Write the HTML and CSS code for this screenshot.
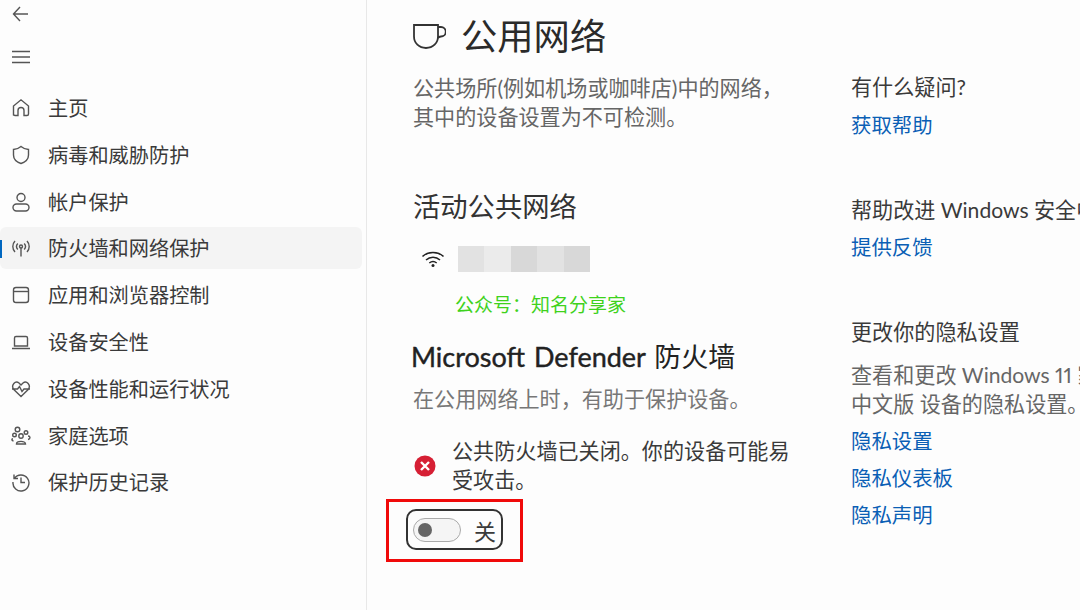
FILE: index.html
```html
<!DOCTYPE html>
<html lang="zh-CN">
<head>
<meta charset="UTF-8" />
<title>公用网络</title>
<link rel="stylesheet" href="styles.css">
</head>
<body>
<div class="app">
  <nav class="sidebar">
    <div class="top-btn back">
      <svg width="18" height="16" viewBox="0 0 18 16"><path d="M8 1 1.500 8 8 15M1.500 8H16" /></svg>
    </div>
    <div class="top-btn menu">
      <svg width="18" height="14" viewBox="0 0 18 14"><path d="M0 1.500H18M0 7H18M0 12.500H18" /></svg>
    </div>
    <ul class="nav-list">
      <li class="nav-item">
        <svg viewBox="0 0 20 20"><path d="M2.500 17.500V8L10 1.800 17.500 8V16A1.500 1.500 0 0 1 16 17.500H13V12.500A3 3 0 0 0 7 12.500V17.500H4A1.500 1.500 0 0 1 2.500 16Z" /></svg>
        <span>主页</span>
      </li>
      <li class="nav-item">
        <svg viewBox="0 0 20 20"><path d="M2.500 4.500C5.500 4.200 8 3.200 10 1.500 12 3.200 14.500 4.200 17.500 4.500V10C17.500 14 15 16.800 10 18.500 5 16.800 2.500 14 2.500 10Z" /></svg>
        <span>病毒和威胁防护</span>
      </li>
      <li class="nav-item">
        <svg viewBox="0 0 20 20"><circle cx="10" cy="5.500" r="4" /><rect x="2" y="12" width="16" height="7" rx="3.500" /></svg>
        <span>帐户保护</span>
      </li>
      <li class="nav-item active">
        <svg viewBox="0 0 20 20"><circle cx="10" cy="8.500" r="1.500" /><path d="M10 10V18.500M6.800 5.500A4.500 4.500 0 0 0 6.800 11.500M13.200 5.500A4.500 4.500 0 0 1 13.200 11.500M4 3A8 8 0 0 0 4 14M16 3A8 8 0 0 1 16 14" /></svg>
        <span>防火墙和网络保护</span>
      </li>
      <li class="nav-item">
        <svg viewBox="0 0 20 20"><rect x="2.500" y="2.500" width="15" height="15" rx="2.500" /><path d="M2.500 6.500H17.500" /></svg>
        <span>应用和浏览器控制</span>
      </li>
      <li class="nav-item">
        <svg viewBox="0 0 20 20"><path d="M3.500 14V6A1.500 1.500 0 0 1 5 4.500H15A1.500 1.500 0 0 1 16.500 6V14ZM1 16.500H19" /></svg>
        <span>设备安全性</span>
      </li>
      <li class="nav-item">
        <svg viewBox="0 0 20 20"><path d="M10 17.500 2.800 10.500C-.5 6 4.500 1 8 4L10 6 12 4C15.500 1 20.500 6 17.200 10.500ZM1 10H6.500L8.500 7.500 11 12.500 13 10H19" /></svg>
        <span>设备性能和运行状况</span>
      </li>
      <li class="nav-item">
        <svg viewBox="0 0 20 20"><circle cx="6.500" cy="3.500" r="2.300" /><circle cx="15" cy="6.500" r="1.800" /><circle cx="3.500" cy="9" r="1.800" /><circle cx="10" cy="10" r="2.200" /><path d="M5.500 18C5.500 14.500 14.500 14.500 14.500 18ZM2 12.800C.5 13 .3 14.500 2.500 15M17 10C19.500 10 19.800 13 17 13.500" /></svg>
        <span>家庭选项</span>
      </li>
      <li class="nav-item">
        <svg viewBox="0 0 20 20"><path d="M3 2.500V6.500H7M3.300 6.500A8 8 0 1 1 2 10M10 5.500V10.500H14" /></svg>
        <span>保护历史记录</span>
      </li>
    </ul>
  </nav>

  <main class="content">
    <header class="page-head">
      <svg class="cup" width="33" height="25" viewBox="0 0 33 25"><path d="M1 1H25V12.500C25 19 20 24 13 24 6 24 1 19 1 12.500ZM25 3H28A4.500 4.500 0 0 1 28 12.500C27 12.500 25.500 13 24.500 14.500" /></svg>
      <h1>公用网络</h1>
    </header>
    <p class="desc">公共场所(例如机场或咖啡店)中的网络，<br>其中的设备设置为不可检测。</p>

    <h2 class="section-title">活动公共网络</h2>
    <div class="network-row">
      <svg width="24" height="18" viewBox="0 0 24 18"><path d="M1.500 6.500C7 1 17 1 22.500 6.500M5 10C9 6.300 15 6.300 19 10M8.300 13C10.500 11.200 13.500 11.200 15.700 13" /><circle cx="12" cy="15.500" r="1.500" class="dot" /></svg>
      <div class="mosaic"><i></i><i></i><i></i><i></i><i></i></div>
    </div>
    <div class="watermark">公众号：知名分享家</div>

    <h2 class="fw-title"><span class="fw-latin">Microsoft Defender</span> 防火墙</h2>
    <p class="fw-desc">在公用网络上时，有助于保护设备。</p>

    <div class="alert">
      <svg width="22" height="22" viewBox="0 0 22 22"><circle cx="11" cy="11" r="10.500" class="err" /><path d="M7 7 15 15M15 7 7 15" class="err-x" /></svg>
      <span>公共防火墙已关闭。你的设备可能易<br>受攻击。</span>
    </div>

    <div class="toggle-box">
      <div class="toggle-focus">
        <div class="toggle"><b></b></div>
        <span>关</span>
      </div>
    </div>
  </main>

  <aside class="side-links">
    <section>
      <h3>有什么疑问?</h3>
      <a>获取帮助</a>
    </section>
    <section>
      <h3>帮助改进 Windows 安全中心</h3>
      <a>提供反馈</a>
    </section>
    <section>
      <h3>更改你的隐私设置</h3>
      <p>查看和更改 Windows 11 家庭<br>中文版 设备的隐私设置。</p>
      <a>隐私设置</a>
      <a>隐私仪表板</a>
      <a>隐私声明</a>
    </section>
  </aside>
</div>
</body>
</html>
```

FILE: styles.css
```css
* {
  box-sizing: border-box;
}
html, body {
  margin: 0;
  height: 100%;
  overflow: hidden;
}
body {
  background: #fdfdfd;
  color: #3a3a3a;
  font-family: Lato, "Noto Sans CJK SC", sans-serif;
  font-size: 20px;
}
svg {
  fill: none;
  stroke: #555;
  stroke-width: 1.4;
}
.app {
  display: flex;
  width: 1080px;
  height: 610px;
}

/* left nav */
.sidebar {
  width: 367px;
  flex: none;
  padding-right: 4px;
  border-right: 1px solid #e8e8e8;
}
.top-btn {
  display: flex;
  align-items: center;
  padding-left: 12px;
}
.back {
  height: 28px;
}
.menu {
  height: 57px;
}
.nav-list {
  list-style: none;
  margin: 0;
  padding: 0;
}
.nav-item {
  display: flex;
  align-items: center;
  gap: 17px;
  height: 46.75px;
  padding-left: 11px;
  line-height: 1;
  font-size: 20.2px;
  position: relative;
}
.nav-item svg {
  width: 20px;
  height: 20px;
  flex: none;
}
.active {
  background: #f4f4f4;
  border-radius: 6px;
  height: 42px;
  margin: 1.500px 0 3.250px;
}
.active::before {
  content: "";
  position: absolute;
  left: 0;
  top: 13px;
  width: 2px;
  height: 18px;
  background: #0067c0;
}

/* middle column */
.content {
  width: 484px;
  flex: none;
  padding-left: 46px;
}
.page-head {
  display: flex;
  align-items: center;
  gap: 15px;
  height: 36px;
  margin-top: 18px;
}
.cup {
  stroke: #333;
  stroke-width: 1.8;
}
h1 {
  margin: 0;
  font-size: 36.3px;
  font-weight: 400;
  line-height: 36px;
  color: #2a2a2a;
}
.desc {
  margin: 19px 0 0;
  font-size: 21.1px;
  line-height: 29px;
  color: #666;
}
.section-title {
  margin: 58px 0 0;
  font-size: 27.3px;
  font-weight: 400;
  line-height: 36px;
  color: #333;
}
.network-row {
  display: flex;
  align-items: center;
  gap: 13px;
  margin-top: 21px;
  padding-left: 8px;
}
.network-row svg {
  stroke: #222;
  stroke-width: 1.5;
}
.network-row .dot {
  fill: #222;
  stroke: none;
}
.mosaic {
  display: flex;
  height: 26px;
}
.mosaic i {
  width: 26.400px;
  background: #e2e2e2;
}
.mosaic i:nth-child(2) {
  background: #ebebeb;
}
.mosaic i:nth-child(3),
.mosaic i:nth-child(5) {
  background: #d8d8d8;
}
.watermark {
  margin-top: 19px;
  padding-left: 42px;
  font-size: 19px;
  line-height: 28px;
  color: #3fd21c;
}
.fw-title {
  margin: 20px 0 0 -2px;
  font-size: 27px;
  font-weight: 400;
  line-height: 36px;
  word-spacing: 2px;
  color: #222;
}
.fw-latin {
  -webkit-text-stroke: 0.4px #222;
}
.fw-desc {
  margin: 9px 0 0;
  font-size: 21.1px;
  line-height: 30px;
  color: #777;
}
.alert {
  display: flex;
  align-items: center;
  gap: 16px;
  margin-top: 23px;
  padding-left: 1px;
  width: 400px;
  font-size: 21.1px;
  line-height: 28.500px;
}
.alert svg {
  flex: none;
}
.err {
  fill: #d61f34;
  stroke: none;
}
.err-x {
  stroke: #fff;
  stroke-width: 2.4;
}
.toggle-box {
  display: inline-block;
  margin: 5px 0 0 -27px;
  padding: 7px 17px 9px 17px;
  border: 3px solid #f00a0a;
}
.toggle-focus {
  display: flex;
  align-items: center;
  gap: 13px;
  width: 97px;
  height: 41px;
  padding-left: 5px;
  border: 2.500px solid #333;
  border-radius: 10px;
  font-size: 22px;
}
.toggle {
  width: 48px;
  height: 24px;
  border: 1px solid #aaa;
  border-radius: 12px;
  background: #f5f5f5;
  padding: 4px;
}
.toggle b {
  display: block;
  width: 14px;
  height: 14px;
  border-radius: 50%;
  background: #666;
}

/* right column */
.side-links {
  flex: none;
  width: 260px;
  white-space: nowrap;
  font-size: 20.4px;
  line-height: 37px;
}
.side-links section {
  margin-bottom: 47px;
}
.side-links section:first-child {
  margin-top: 68px;
}
h3 {
  margin: 0 0 1.500px;
  font-size: 21.1px;
  font-weight: 400;
  color: #3a3a3a;
}
.side-links p {
  margin: 11px 0 5px;
  font-size: 21.1px;
  line-height: 28.500px;
  font-variant-numeric: proportional-nums;
  color: #666;
}
.side-links a {
  display: block;
  color: #0b5fb5;
}
```
